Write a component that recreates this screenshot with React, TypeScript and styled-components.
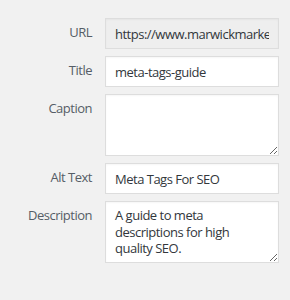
import styled, { createGlobalStyle } from "styled-components";

const GlobalStyle = createGlobalStyle`
    body {
        margin: 0;
        background: #f1f1f1;
        font-family: "Open Sans", "Liberation Sans", sans-serif;
    }
`;

const Form = styled.div`
    display: grid;
    grid-template-columns: 92px 174px;
    column-gap: 13px;
    row-gap: 7px;
    padding-top: 18px;
`;
const Label = styled.label`
    text-align: right;
    font-size: 13px;
    letter-spacing: -0.5px;
    line-height: 17px;
    color: #555d66;
    padding-top: 6px;
`;
const Field = styled.input<{ $readOnly?: boolean }>`
    box-sizing: border-box;
    width: 174px;
    height: 31px;
    margin: 0;
    padding: 6px 9px;
    border: 1px solid #ddd;
    border-radius: 0;
    background: ${p => (p.$readOnly ? "#eee" : "#fff")};
    font-family: inherit;
    font-size: 13px;
    letter-spacing: -0.5px;
    line-height: 17px;
    color: #32373c;
    box-shadow: inset 0 1px 2px rgba(0, 0, 0, 0.04);
    outline: none;
`;
const Area = styled.textarea`
    box-sizing: border-box;
    width: 174px;
    height: 62px;
    margin: 0;
    padding: 5px 9px;
    border: 1px solid #ddd;
    border-radius: 0;
    background: #fff;
    font-family: inherit;
    font-size: 13px;
    letter-spacing: -0.5px;
    line-height: 16.7px;
    color: #32373c;
    resize: vertical;
    overflow: hidden;
    display: block;
    box-shadow: inset 0 1px 2px rgba(0, 0, 0, 0.04);
    outline: none;
`;

function App() {
    return (<>
        <GlobalStyle />
        <Form>
            <Label>URL</Label>
            <Field $readOnly readOnly defaultValue="https://www.marwickmarketing.com/meta-tags-guide" />
            <Label>Title</Label>
            <Field defaultValue="meta-tags-guide" />
            <Label>Caption</Label>
            <Area defaultValue="" />
            <Label>Alt Text</Label>
            <Field defaultValue="Meta Tags For SEO" />
            <Label>Description</Label>
            <Area defaultValue="A guide to meta descriptions for high quality SEO." />
        </Form>
    </>);
}

export default App;
